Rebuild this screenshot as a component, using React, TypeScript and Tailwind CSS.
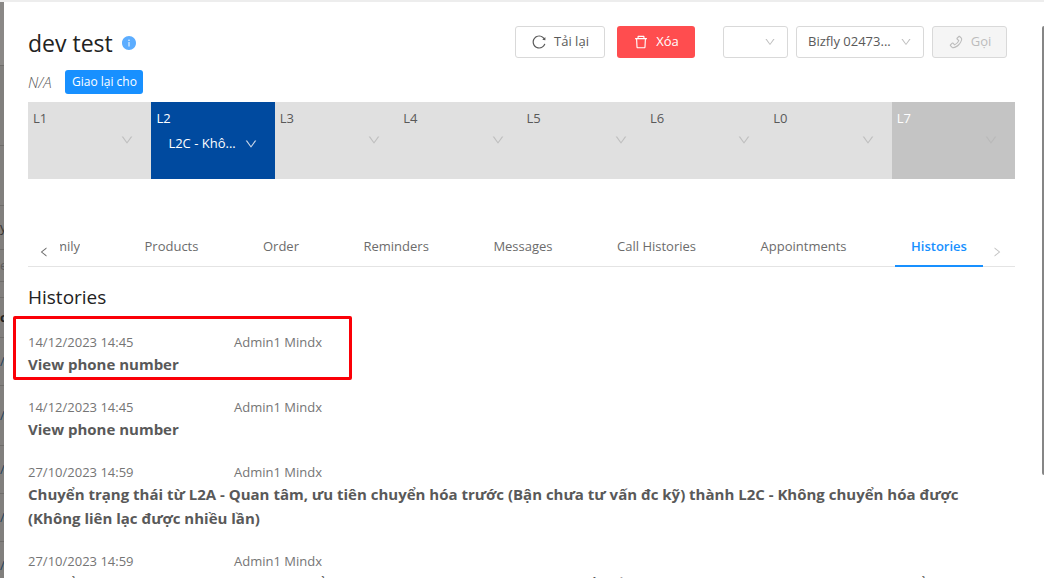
import {
  AiFillInfoCircle,
  AiOutlineDelete,
  AiOutlineDown,
  AiOutlineLeft,
  AiOutlinePhone,
  AiOutlineReload,
  AiOutlineRight,
} from "react-icons/ai";

const stages = [
  { name: "L1" },
  { name: "L2", value: "L2C - Khô..." },
  { name: "L3" },
  { name: "L4" },
  { name: "L5" },
  { name: "L6" },
  { name: "L0" },
  { name: "L7" },
];

const tabs = [
  "Products",
  "Order",
  "Reminders",
  "Messages",
  "Call Histories",
  "Appointments",
];

const histories = [
  {
    time: "14/12/2023 14:45",
    user: "Admin1 Mindx",
    content: "View phone number",
    highlight: true,
  },
  {
    time: "14/12/2023 14:45",
    user: "Admin1 Mindx",
    content: "View phone number",
  },
  {
    time: "27/10/2023 14:59",
    user: "Admin1 Mindx",
    content:
      "Chuyển trạng thái từ L2A - Quan tâm, ưu tiên chuyển hóa trước (Bận chưa tư vấn đc kỹ) thành L2C - Không chuyển hóa được (Không liên lạc được nhiều lần)",
  },
  {
    time: "27/10/2023 14:59",
    user: "Admin1 Mindx",
    content:
      "Chuyển trạng thái từ L2C - Không chuyển hóa được (Không liên lạc được nhiều lần) thành L2A - Quan tâm, ưu tiên chuyển hóa trước",
  },
];

// Table behind the drawer, only its edge is visible
function Backdrop() {
  return (
    <aside
      aria-hidden="true"
      className="w-1 shrink-0 overflow-hidden bg-[#817f7d] text-[#223f5c] *:flex *:items-center *:border-b *:border-[#6f6d6b]"
    >
      <div className="h-16 bg-[#8a8886]" />
      <div className="h-20" />
      <div className="h-15" />
      <div className="h-11 text-[#333]">y</div>
      <div className="h-8 text-[#5c5c5c]">e</div>
      <div className="h-4" />
      <div className="h-10 font-bold text-[#222]">c</div>
      <div className="h-12">/A</div>
      <div className="h-15">/A</div>
      <div className="h-12">/A</div>
      <div className="h-12">/A</div>
      <div className="h-12">/A</div>
    </aside>
  );
}

function Header() {
  return (
    <div className="flex items-start justify-between pr-2">
      <div className="flex items-center gap-2">
        <h1 className="text-[23px] leading-[34px] font-medium text-[#222]">dev test</h1>
        <AiFillInfoCircle className="size-4 text-[#5cadff]" />
      </div>
      <div className="flex gap-3">
        <button className="flex h-8 w-[90px] items-center justify-center gap-[7px] rounded-[3px] border border-[#d9d9d9]">
          <AiOutlineReload className="size-4" />
          Tải lại
        </button>
        <button className="flex h-8 w-[78px] items-center justify-center gap-[7px] rounded-[3px] bg-[#ff4d4f] text-white">
          <AiOutlineDelete className="size-4" />
          Xóa
        </button>
        <div className="ml-4 flex gap-2">
          <div className="relative">
            <select
              aria-label="Phone"
              className="h-8 w-[65px] appearance-none rounded-[3px] border border-[#d9d9d9] px-3"
            >
              <option></option>
            </select>
            <AiOutlineDown className="pointer-events-none absolute top-2.5 right-3 size-3 text-[#bfbfbf]" />
          </div>
          <div className="relative">
            <select
              aria-label="Line"
              className="h-8 w-32 appearance-none rounded-[3px] border border-[#d9d9d9] px-[11px]"
            >
              <option>Bizfly 02473...</option>
            </select>
            <AiOutlineDown className="pointer-events-none absolute top-2.5 right-3 size-3 text-[#bfbfbf]" />
          </div>
          <button
            disabled
            className="flex h-8 w-[75px] items-center justify-center gap-[7px] rounded-[3px] border border-[#d9d9d9] bg-[#f5f5f5] text-[#bcbcbc]"
          >
            <AiOutlinePhone className="size-4" />
            Gọi
          </button>
        </div>
      </div>
    </div>
  );
}

function Stages() {
  return (
    <div className="mt-2 grid grid-cols-8">
      {stages.map(({ name, value }) => {
        let color = "bg-[#e0e0e0]";
        let arrow = "text-[#bfbfbf]";
        if (value) {
          color = "bg-[#004a9f] text-white";
          arrow = "text-[#c8d6e8]";
        } else if (name === "L7") {
          color = "bg-[#c4c4c4] text-white";
          arrow = "text-[#b9b9b9]";
        }
        return (
          <div key={name} className={`h-[77px] px-[5px] pt-1.5 ${color}`}>
            <label htmlFor={name} className="block leading-5">
              {name}
            </label>
            <div className="relative">
              <select
                id={name}
                className={`w-full appearance-none pl-3 ${value ? "h-8" : "h-6"}`}
              >
                <option>{value}</option>
              </select>
              <AiOutlineDown
                className={`pointer-events-none absolute right-3 size-[14px] ${value ? "top-[9px]" : "top-[5px]"} ${arrow}`}
              />
            </div>
          </div>
        );
      })}
    </div>
  );
}

function Tabs() {
  return (
    <div className="mt-12 flex h-10 items-stretch border-b border-[#e4e4e4] text-[#6c6c6c]">
      <button aria-label="Previous tabs" className="w-8 pt-2.5 pl-2.5">
        <AiOutlineLeft className="size-3" />
      </button>
      <div className="flex flex-1 justify-between">
        <button className="flex w-5 items-center justify-end overflow-hidden">mily</button>
        {tabs.map((tab) => (
          <button key={tab}>{tab}</button>
        ))}
        <button className="-mb-px -ml-4 border-b-2 border-[#1890ff] px-4 pt-0.5 font-semibold text-[#1890ff]">
          Histories
        </button>
      </div>
      <button aria-label="Next tabs" className="w-8 pt-2.5 pl-2 text-[#c4c4c4]">
        <AiOutlineRight className="size-3" />
      </button>
    </div>
  );
}

export default function App() {
  return (
    <div className="flex h-screen overflow-hidden border-t-2 border-[#ededed] bg-white font-['Open_Sans','Noto_Sans',sans-serif] text-[13px] text-[#595959]">
      <Backdrop />
      <main className="min-w-0 flex-1 overflow-hidden pt-6 pr-[27px] pl-6">
        <Header />
        <div className="mt-2.5 flex items-center gap-3.5">
          <span className="text-[15px] leading-6 font-light italic">N/A</span>
          <button className="h-6 w-[78px] rounded-[3px] bg-[#1890ff] text-xs text-white">
            Giao lại cho
          </button>
        </div>
        <Stages />
        <Tabs />
        <h2 className="mt-4 text-[19px] leading-7 font-medium text-[#222]">Histories</h2>
        <ul className="mt-1">
          {histories.map((item, index) => (
            <li key={index} className="relative pt-[17px] pb-1">
              {item.highlight && (
                <div className="pointer-events-none absolute top-px -left-[15px] h-16 w-[339px] rounded-[2px] border-3 border-[#fb0007]" />
              )}
              <div className="flex leading-5 text-[#757575]">
                <span className="w-[206px]">{item.time}</span>
                <span>{item.user}</span>
              </div>
              <p className="pr-6 text-[15px] leading-6 font-bold">{item.content}</p>
            </li>
          ))}
        </ul>
      </main>
      <div className="mt-6 h-[449px] w-0.5 rounded-l bg-[#868686]" />
    </div>
  );
}
